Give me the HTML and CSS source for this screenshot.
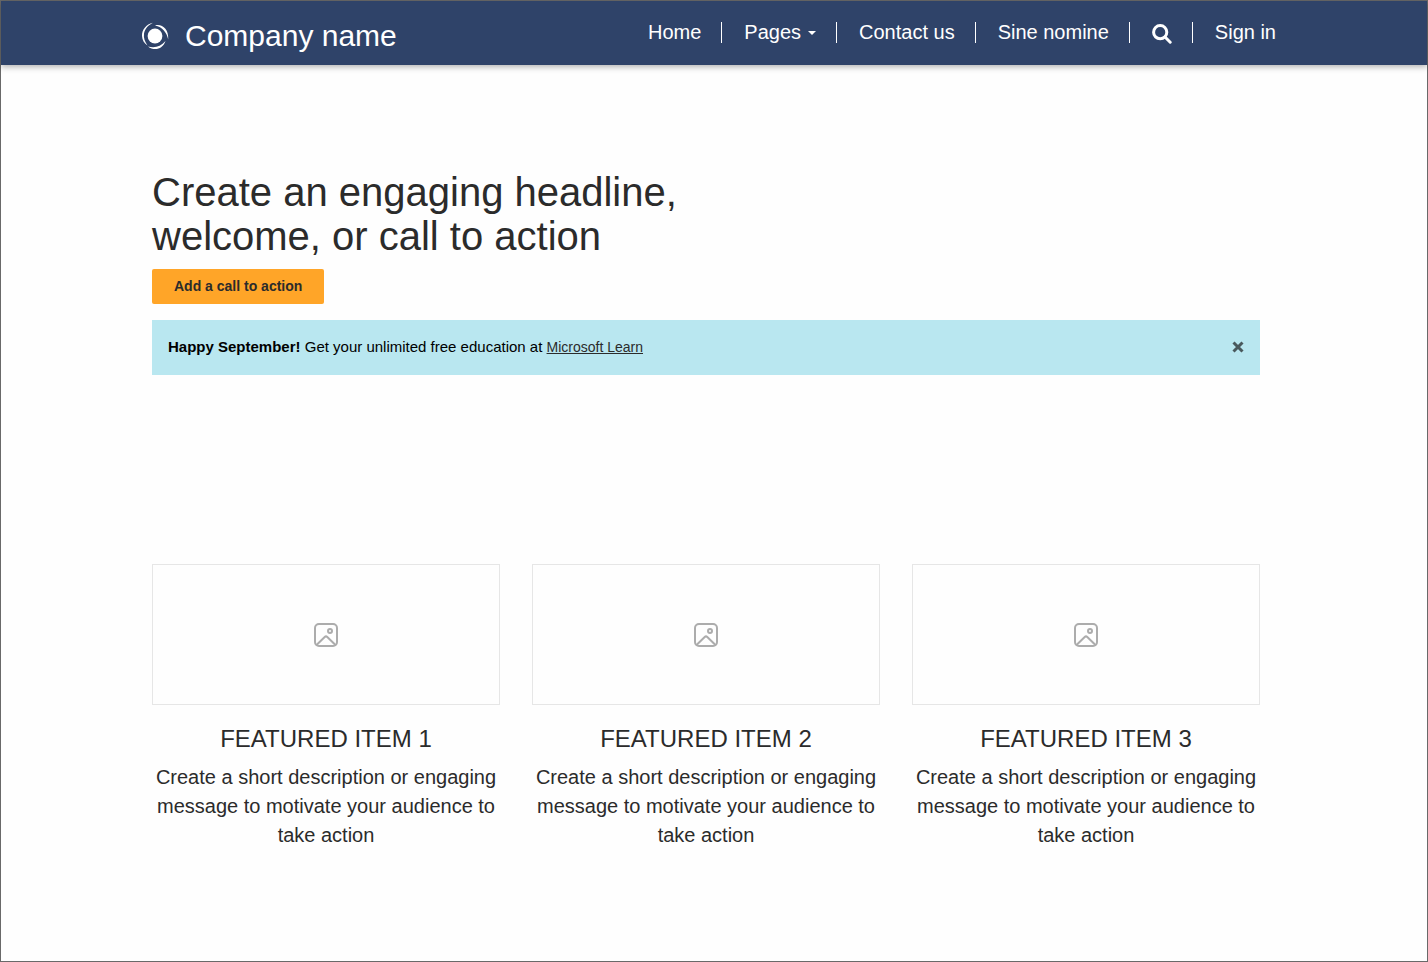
FILE: index.html
```html
<!DOCTYPE html>
<html lang="en">
<head>
<meta charset="utf-8">
<title>Company name</title>
<link rel="stylesheet" href="styles.css">
</head>
<body>
<div class="page">
  <header class="site-header">
    <div class="container header-row">
      <a class="brand" href="#">
        <svg class="brand-logo" viewBox="0 0 28 28" aria-hidden="true">
          <circle cx="14" cy="14" r="7.4"/>
          <path d="M12 .8C5 2.200 .8 8 1 14c.2 4.500 2.500 7.500 5.500 9.500C3.800 19.500 2.400 16 3 11.500 4 6.500 7.500 3 12 .8Z"/>
          <path d="M14 3.400C20.500 1.300 28 6.500 27.200 17.500 25.800 10.500 21.500 4.600 14 3.400Z"/>
          <path d="M7 24.400C13 29.300 22 27.300 24.500 19 19.500 24.800 13.500 26.200 7 24.400Z"/>
          <path class="logo-arc" d="M10.500 4.600C5.500 7.500 3.500 13 5.600 19"/>
        </svg>
        <span>Company name</span>
      </a>
      <nav class="nav" aria-label="Main">
        <a class="nav-item" href="#">Home</a>
        <button class="nav-item" type="button">Pages<span class="caret"></span></button>
        <a class="nav-item" href="#">Contact us</a>
        <a class="nav-item" href="#">Sine nomine</a>
        <button class="nav-item" type="button" aria-label="Search">
          <svg class="search-icon" viewBox="0 0 20 20" aria-hidden="true"><circle cx="8.200" cy="8.200" r="6.600"/><path d="M13 13l5.200 5.200"/></svg>
        </button>
        <a class="nav-item" href="#">Sign in</a>
      </nav>
    </div>
  </header>
  <main class="main">
    <div class="container content">
      <section class="hero">
        <h1 class="headline">Create an engaging headline, welcome, or call to action</h1>
        <button class="cta" type="button">Add a call to action</button>
      </section>
      <div class="alert" role="alert">
        <p class="alert-text"><strong>Happy September!</strong> Get your unlimited free education at <a class="alert-link" href="#">Microsoft Learn</a></p>
        <button class="close" type="button" aria-label="Close">
          <svg class="close-icon" viewBox="0 0 12 12" aria-hidden="true"><path d="M1.500 1.500l9 9M10.500 1.500l-9 9"/></svg>
        </button>
      </div>
      <section class="features">
        <article class="feature">
          <div class="placeholder"><svg class="image-icon" viewBox="0 0 24 24" aria-hidden="true"><rect x="1" y="1" width="22" height="22" rx="4"/><circle cx="16" cy="8" r="2"/><path d="M2.500 22l8.200-8q1.300-1.200 2.600 0l8.200 8"/></svg></div>
          <h2 class="feature-title">FEATURED ITEM 1</h2>
          <p class="feature-text">Create a short description or engaging message to motivate your audience to take action</p>
        </article>
        <article class="feature">
          <div class="placeholder"><svg class="image-icon" viewBox="0 0 24 24" aria-hidden="true"><rect x="1" y="1" width="22" height="22" rx="4"/><circle cx="16" cy="8" r="2"/><path d="M2.500 22l8.200-8q1.300-1.200 2.600 0l8.200 8"/></svg></div>
          <h2 class="feature-title">FEATURED ITEM 2</h2>
          <p class="feature-text">Create a short description or engaging message to motivate your audience to take action</p>
        </article>
        <article class="feature">
          <div class="placeholder"><svg class="image-icon" viewBox="0 0 24 24" aria-hidden="true"><rect x="1" y="1" width="22" height="22" rx="4"/><circle cx="16" cy="8" r="2"/><path d="M2.500 22l8.200-8q1.300-1.200 2.600 0l8.200 8"/></svg></div>
          <h2 class="feature-title">FEATURED ITEM 3</h2>
          <p class="feature-text">Create a short description or engaging message to motivate your audience to take action</p>
        </article>
      </section>
    </div>
  </main>
</div>
</body>
</html>
```
FILE: styles.css
```css
* { box-sizing: border-box; }
body {
  margin: 0;
  font-family: "Liberation Sans", Arial, sans-serif;
  font-size: 15px;
  color: #2b2b2b;
  background: #fefefe;
}
h1, h2, p { margin: 0; font-weight: 400; }
button { font: inherit; color: inherit; border: 0; padding: 0; background: none; cursor: pointer; }
a { color: inherit; text-decoration: none; }

.page { min-height: 100vh; border: 1px solid #696969; }
.container { max-width: 1140px; margin: 0 auto; }

.site-header {
  background: #2f4369;
  color: #fff;
  padding-right: 16px;
  box-shadow: 0 2px 6px rgba(0, 0, 0, 0.3);
}
.header-row { display: flex; justify-content: space-between; align-items: flex-start; }
.brand {
  display: flex;
  align-items: center;
  gap: 16px;
  padding: 18px 0 12px 5px;
  font-size: 30px;
  line-height: 34px;
}
.brand-logo { width: 28px; height: 28px; fill: #fff; }
.logo-arc { fill: none; stroke: #2f4369; stroke-width: 1; }
.nav { display: flex; padding-top: 21px; font-size: 20px; line-height: 20px; }
.nav-item { display: flex; align-items: center; height: 21px; padding: 0 20px 2px 22px; }
.nav-item + .nav-item { border-left: 1px solid #fff; }
.nav-item:last-child { padding-right: 0; }
.caret { margin: 3px 0 0 7px; border: 4px solid transparent; border-top-color: #fff; border-bottom: 0; }
.search-icon { width: 20px; height: 20px; margin-top: 5px; fill: none; stroke: #fff; stroke-width: 3; stroke-linecap: round; }

.main { padding-right: 16px; }
.content { padding: 105px 16px 64px; }
.hero { display: flex; flex-direction: column; align-items: flex-start; gap: 11px; }
.headline { max-width: 554px; font-size: 40px; line-height: 44px; }
.cta {
  padding: 9px 22px 10px;
  border-radius: 2px;
  background: #ffa528;
  font-size: 14px;
  line-height: 16px;
  font-weight: 700;
}
.alert {
  display: flex;
  justify-content: space-between;
  align-items: center;
  margin-top: 16px;
  padding: 15px 16px 17px;
  background: #b9e7f0;
}
.alert-text { line-height: 23px; color: #000; }
.alert-link { font-size: 14px; line-height: 16px; color: #2b2b2b; text-decoration: underline; }
.close { display: flex; }
.close-icon { width: 12px; height: 12px; fill: none; stroke: #49595d; stroke-width: 3; }

.features { display: grid; grid-template-columns: repeat(3, 1fr); gap: 32px; margin-top: 189px; }
.feature { text-align: center; }
.placeholder { display: flex; justify-content: center; padding: 58px 0 57px; border: 1px solid #e6e6e6; }
.image-icon { width: 24px; height: 24px; fill: none; stroke: #acacac; stroke-width: 2; }
.feature-title { margin-top: 20px; font-size: 24px; line-height: 28px; }
.feature-text { margin-top: 10px; font-size: 20px; line-height: 29px; }
```
